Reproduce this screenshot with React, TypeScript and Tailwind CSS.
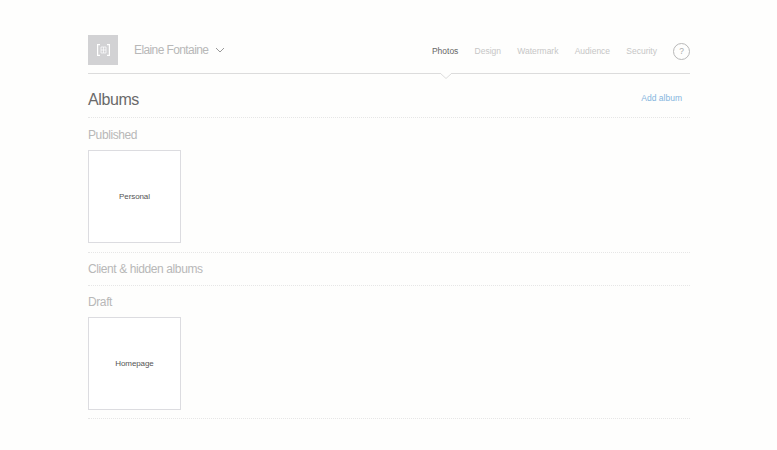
const tabs = ["Design", "Watermark", "Audience", "Security"];

function SectionTitle({ children }: { children: string }) {
  return <h2 className="text-[12px] leading-[16px] tracking-[-0.4px] text-[#b8b8b8]">{children}</h2>;
}

function AlbumCard({ name }: { name: string }) {
  return (
    <div className="flex h-[93px] w-[93px] items-center justify-center border border-[#dcdce0] bg-white text-[8px] tracking-[-0.1px] text-[#555]">
      {name}
    </div>
  );
}

export default function App() {
  return (
    <div className="box-border min-h-[450px] w-[777px] bg-[#fefefd] pt-[35px] pr-[87px] pl-[88px] font-['Liberation_Sans',sans-serif]">
      <header className="relative flex h-[39px] items-start border-b border-[#dcdcdc]">
        <div className="flex h-[30px] w-[30px] items-center justify-center bg-[#d2d2d4] pl-[1px]">
          <svg width="13" height="12" viewBox="0 0 13 12" fill="none" stroke="#fff" strokeWidth="1.2">
            <path d="M3 .6H.6V11.4H3M10 .6H12.4V11.4H10" />
            <path d="M4 3H9V9H4ZM6.5 3V9M4 6H9" strokeWidth="0.7" />
          </svg>
        </div>
        <div className="ml-4 flex h-[30px] items-center text-[12px] tracking-[-0.6px] text-[#b8b8b8]">
          Elaine Fontaine
          <svg className="ml-[7px]" width="10" height="6" viewBox="0 0 10 6" fill="none" stroke="#8d8d8d" strokeWidth="0.9">
            <path d="M1 1L5 5L9 1" />
          </svg>
        </div>
        <nav className="ml-auto flex h-[32px] items-center text-[8.5px]">
          <span className="text-[#666]">Photos</span>
          {tabs.map((t) => (
            <span key={t} className="ml-[16.2px] text-[#c6c6c6]">
              {t}
            </span>
          ))}
          <span className="ml-[16px] flex h-[17px] w-[17px] items-center justify-center rounded-full border border-[#b8b8b8] text-[8.5px] text-[#aaa]">
            ?
          </span>
        </nav>
        <svg className="absolute left-[352px] top-[38px]" width="12" height="6" viewBox="0 0 12 6">
          <path d="M0 0L6 5.5L12 0" fill="#fefefd" stroke="#dcdcdc" strokeWidth="1" />
        </svg>
      </header>

      <div className="flex h-[44px] items-center justify-between border-b border-dotted border-[#e6e6e6] pt-[9px]">
        <h1 className="text-[16px] tracking-[-0.4px] text-[#6a6a6a]">Albums</h1>
        <a className="mr-[8px] mb-[4px] text-[8.5px] text-[#85b5de]">Add album</a>
      </div>

      <div className="border-b border-dotted border-[#e6e6e6] pt-[9px] pb-[9px]">
        <SectionTitle>Published</SectionTitle>
        <div className="mt-[7px]">
          <AlbumCard name="Personal" />
        </div>
      </div>

      <div className="border-b border-dotted border-[#e6e6e6] pt-[8px] pb-[8px]">
        <SectionTitle>Client &amp; hidden albums</SectionTitle>
      </div>

      <div className="border-b border-dotted border-[#e6e6e6] pt-[8px] pb-[8px]">
        <SectionTitle>Draft</SectionTitle>
        <div className="mt-[7px]">
          <AlbumCard name="Homepage" />
        </div>
      </div>
    </div>
  );
}
